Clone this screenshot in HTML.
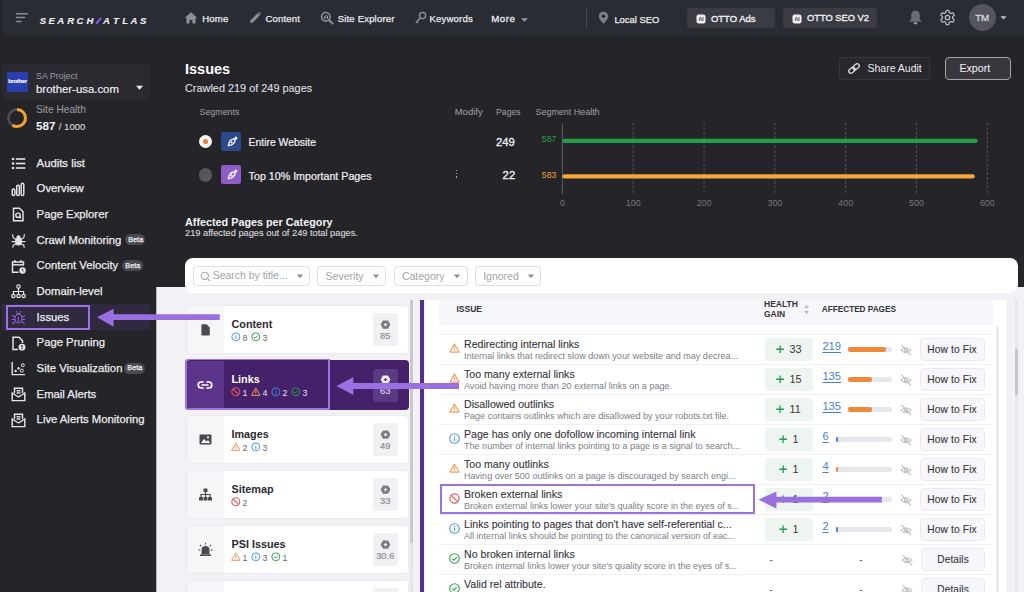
<!DOCTYPE html>
<html><head><meta charset="utf-8"><style>
html,body{margin:0;padding:0;}
body{width:1024px;height:592px;overflow:hidden;position:relative;background:#252429;font-family:"Liberation Sans",sans-serif;}
.t{position:absolute;white-space:nowrap;line-height:1;}
.b{position:absolute;}
svg.b{overflow:visible;}
</style></head><body>
<div class="b" style="left:2.00px;top:-10.00px;width:1022.00px;height:45.50px;background:#2a2c34;border-radius:0 0 0 9px;"></div>
<svg class="b" style="left:14.00px;top:10.00px;" width="16" height="14" viewBox="0 0 16 14"><g stroke="#8d8d93" stroke-width="1.6" stroke-linecap="round"><line x1="2.5" y1="3.7" x2="13.3" y2="3.7"/><line x1="2.5" y1="7.5" x2="10.5" y2="7.5"/><line x1="2.5" y1="11.5" x2="7" y2="11.5"/></g></svg>
<svg class="b" style="left:35.00px;top:10.00px;" width="120" height="20" viewBox="0 0 120 20"><g transform="scale(1.120,1)"><text x="4.20 12.05 19.91 28.75 37.14 46.07 60.71 69.64 77.95 85.27 93.75" y="13.85" font-family="Liberation Sans" font-weight="bold" font-style="italic" font-size="8.5" fill="#f2f2f4" stroke="#f2f2f4" stroke-width="0.1">SEARCHATLAS</text></g><line x1="61.2" y1="13.6" x2="66.0" y2="7.8" stroke="#8f5cf5" stroke-width="1.9"/></svg>
<svg class="b" style="left:184.00px;top:11.30px;" width="14" height="14" viewBox="0 0 14 14"><path d="M7 1.3 L13.2 6.8 L11.6 6.8 L11.6 12.6 L8.4 12.6 L8.4 9 L5.6 9 L5.6 12.6 L2.4 12.6 L2.4 6.8 L0.8 6.8 Z" fill="#8e8e94"/></svg>
<div class="t " style="left:202.20px;top:14.07px;font-size:9.6px;color:#e9e9ec;font-weight:normal;letter-spacing:0.15px;-webkit-text-stroke:0.25px #e9e9ec">Home</div>
<svg class="b" style="left:248.00px;top:11.30px;" width="14" height="14" viewBox="0 0 14 14"><path d="M2 12 L2.6 9.2 L9.8 2 L12 4.2 L4.8 11.4 Z" fill="#8e8e94"/><path d="M10.4 1.4 L11.2 0.8 L13.2 2.8 L12.6 3.6Z" fill="#8e8e94"/></svg>
<div class="t " style="left:265.50px;top:14.07px;font-size:9.6px;color:#e9e9ec;font-weight:normal;letter-spacing:0.15px;-webkit-text-stroke:0.25px #e9e9ec">Content</div>
<svg class="b" style="left:320.00px;top:10.80px;" width="14" height="14" viewBox="0 0 14 14"><circle cx="5.8" cy="5.8" r="4.3" stroke="#8e8e94" stroke-width="1.6" fill="none"/><line x1="9" y1="9" x2="12.6" y2="12.6" stroke="#8e8e94" stroke-width="2" stroke-linecap="round"/><rect x="3.8" y="5" width="1.1" height="2.8" fill="#8e8e94"/><rect x="5.4" y="3.6" width="1.1" height="4.2" fill="#8e8e94"/><rect x="7" y="4.6" width="1.1" height="3.2" fill="#8e8e94"/></svg>
<div class="t " style="left:337.70px;top:14.07px;font-size:9.6px;color:#e9e9ec;font-weight:normal;letter-spacing:0.15px;-webkit-text-stroke:0.25px #e9e9ec">Site Explorer</div>
<svg class="b" style="left:414.00px;top:11.30px;" width="13" height="14" viewBox="0 0 13 14"><circle cx="8.6" cy="4.6" r="3.1" stroke="#8e8e94" stroke-width="1.4" fill="none"/><line x1="6.5" y1="6.8" x2="1.8" y2="11.8" stroke="#8e8e94" stroke-width="1.4"/><line x1="2.6" y1="10.6" x2="4.2" y2="12.2" stroke="#8e8e94" stroke-width="1.2"/></svg>
<div class="t " style="left:429.50px;top:14.07px;font-size:9.6px;color:#e9e9ec;font-weight:normal;letter-spacing:0.15px;-webkit-text-stroke:0.25px #e9e9ec">Keywords</div>
<div class="t " style="left:491.30px;top:13.99px;font-size:9.7px;color:#e9e9ec;font-weight:normal;-webkit-text-stroke:0.3px #e9e9ec;letter-spacing:0.5px">More</div>
<svg class="b" style="left:519.50px;top:16.50px;" width="9" height="6" viewBox="0 0 9 6"><path d="M1 1.2 L8 1.2 L4.5 4.8Z" fill="#9a9aa0"/></svg>
<div class="b" style="left:586.00px;top:7.00px;width:1.00px;height:22.00px;background:#45474e"></div>
<svg class="b" style="left:598.00px;top:11.20px;" width="11" height="14" viewBox="0 0 11 14"><path d="M5.5 0.8 C8.3 0.8 10.2 2.8 10.2 5.3 C10.2 8.2 5.5 12.8 5.5 12.8 C5.5 12.8 0.8 8.2 0.8 5.3 C0.8 2.8 2.7 0.8 5.5 0.8Z" fill="#7e7e85"/><circle cx="5.5" cy="5.2" r="1.7" fill="#2a2b32"/></svg>
<div class="t " style="left:614.40px;top:14.54px;font-size:9.4px;color:#ececef;font-weight:normal;-webkit-text-stroke:0.25px #ececef">Local SEO</div>
<div class="b" style="left:687.00px;top:8.00px;width:88.00px;height:19.90px;background:#3a3b43;border-radius:3px"></div>
<svg class="b" style="left:695.50px;top:13.50px;" width="10" height="10" viewBox="0 0 10 10"><rect x="0.5" y="0.5" width="9" height="9" rx="2" fill="#f0f0f2"/><text x="5" y="7.3" font-size="5.2" font-weight="bold" text-anchor="middle" fill="#3a3b43" font-family="Liberation Sans">AI</text></svg>
<div class="t " style="left:710.90px;top:14.26px;font-size:9.5px;color:#f0f0f2;font-weight:normal;-webkit-text-stroke:0.35px #f0f0f2">OTTO Ads</div>
<div class="b" style="left:783.00px;top:8.00px;width:94.20px;height:19.90px;background:#3a3b43;border-radius:3px"></div>
<svg class="b" style="left:791.50px;top:13.50px;" width="10" height="10" viewBox="0 0 10 10"><rect x="0.5" y="0.5" width="9" height="9" rx="2" fill="#f0f0f2"/><text x="5" y="7.3" font-size="5.2" font-weight="bold" text-anchor="middle" fill="#3a3b43" font-family="Liberation Sans">AI</text></svg>
<div class="t " style="left:807.00px;top:14.43px;font-size:9.3px;color:#f0f0f2;font-weight:normal;-webkit-text-stroke:0.35px #f0f0f2">OTTO SEO V2</div>
<svg class="b" style="left:908.00px;top:9.00px;" width="15" height="17" viewBox="0 0 15 17"><path d="M7.5 1.4 C10.4 1.4 11.8 3.6 11.8 6.6 L11.8 10.2 L13.8 12.8 L1.2 12.8 L3.2 10.2 L3.2 6.6 C3.2 3.6 4.6 1.4 7.5 1.4Z" fill="#6b6b72"/><rect x="5.6" y="13.3" width="3.8" height="1.9" rx="0.9" fill="#9a9aa0"/></svg>
<svg class="b" style="left:939.00px;top:8.80px;" width="17" height="17" viewBox="0 0 17 17"><path d="M8.50 1.38 L8.87 1.39 L9.24 1.45 L9.60 1.58 L9.90 1.93 L10.08 2.61 L10.19 3.29 L10.36 3.65 L10.58 3.83 L10.81 3.97 L11.04 4.10 L11.27 4.24 L11.50 4.37 L11.77 4.46 L12.17 4.43 L12.81 4.19 L13.49 4.00 L13.94 4.09 L14.24 4.33 L14.47 4.62 L14.67 4.94 L14.84 5.27 L14.98 5.62 L15.04 5.99 L14.89 6.42 L14.39 6.92 L13.86 7.36 L13.63 7.69 L13.58 7.97 L13.57 8.23 L13.58 8.50 L13.57 8.77 L13.58 9.03 L13.63 9.31 L13.86 9.64 L14.39 10.08 L14.89 10.58 L15.04 11.01 L14.98 11.38 L14.84 11.73 L14.67 12.06 L14.47 12.38 L14.24 12.67 L13.94 12.91 L13.49 13.00 L12.81 12.81 L12.17 12.57 L11.77 12.54 L11.50 12.63 L11.27 12.76 L11.04 12.90 L10.81 13.03 L10.58 13.17 L10.36 13.35 L10.19 13.71 L10.08 14.39 L9.90 15.07 L9.60 15.42 L9.24 15.55 L8.87 15.61 L8.50 15.62 L8.13 15.61 L7.76 15.55 L7.40 15.42 L7.10 15.07 L6.92 14.39 L6.81 13.71 L6.64 13.35 L6.42 13.17 L6.19 13.03 L5.96 12.90 L5.73 12.76 L5.50 12.63 L5.23 12.54 L4.83 12.57 L4.19 12.81 L3.51 13.00 L3.06 12.91 L2.76 12.67 L2.53 12.38 L2.33 12.06 L2.16 11.73 L2.02 11.38 L1.96 11.01 L2.11 10.58 L2.61 10.08 L3.14 9.64 L3.37 9.31 L3.42 9.03 L3.43 8.77 L3.42 8.50 L3.43 8.23 L3.42 7.97 L3.37 7.69 L3.14 7.36 L2.61 6.92 L2.11 6.42 L1.96 5.99 L2.02 5.62 L2.16 5.27 L2.33 4.94 L2.53 4.62 L2.76 4.33 L3.06 4.09 L3.51 4.00 L4.19 4.19 L4.83 4.43 L5.23 4.46 L5.50 4.37 L5.73 4.24 L5.96 4.10 L6.19 3.97 L6.42 3.83 L6.64 3.65 L6.81 3.29 L6.92 2.61 L7.10 1.93 L7.40 1.58 L7.76 1.45 L8.13 1.39Z" stroke="#b9b9be" stroke-width="1.3" fill="none" stroke-linejoin="round"/><circle cx="8.5" cy="8.5" r="2.2" stroke="#b9b9be" stroke-width="1.3" fill="none"/></svg>
<div class="b" style="left:969.00px;top:4.00px;width:27.00px;height:27.00px;background:#55565d;border-radius:50%"></div>
<div class="t " style="left:975.20px;top:13.30px;font-size:9.8px;color:#d5d5d9;font-weight:normal;letter-spacing:-0.2px;-webkit-text-stroke:0.3px #d5d5d9">TM</div>
<svg class="b" style="left:999.00px;top:15.00px;" width="9" height="6" viewBox="0 0 9 6"><path d="M1.5 1.2 L7.5 1.2 L4.5 4.5Z" fill="#c8c8cc"/></svg>
<div class="b" style="left:2.00px;top:64.00px;width:148.00px;height:35.50px;background:#2b2a31;border-radius:4px"></div>
<div class="b" style="left:7.00px;top:72.00px;width:21.00px;height:20.00px;background:#2a3fae"></div>
<div class="t " style="left:8.20px;top:79.47px;font-size:5.7px;color:#ffffff;font-weight:bold;letter-spacing:-0.2px;-webkit-text-stroke:0.15px #fff">brother</div>
<div class="t " style="left:36.00px;top:71.87px;font-size:8.9px;color:#9d9da4;font-weight:normal;">SA Project</div>
<div class="t " style="left:36.00px;top:84.05px;font-size:11.4px;color:#f1f1f3;font-weight:normal;-webkit-text-stroke:0.15px #f1f1f3">brother-usa.com</div>
<svg class="b" style="left:135.00px;top:85.00px;" width="9" height="6" viewBox="0 0 9 6"><path d="M1 0.8 L8 0.8 L4.5 4.8Z" fill="#f0f0f2"/></svg>
<svg class="b" style="left:6.00px;top:106.50px;" width="22" height="22" viewBox="0 0 22 22"><circle cx="11" cy="11" r="8.5" stroke="#4b4b51" stroke-width="3" fill="none"/><circle cx="11" cy="11" r="8.5" stroke="#f5a32a" stroke-width="3" fill="none" stroke-dasharray="31.35 100" transform="rotate(-90 11 11)"/></svg>
<div class="t " style="left:36.00px;top:104.97px;font-size:10.2px;color:#9d9da4;font-weight:normal;">Site Health</div>
<div class="t" style="left:36px;top:119.60px;font-size:11.7px;color:#f2f2f4;font-weight:bold;">587 <span style="font-size:9.6px;font-weight:normal;color:#e4e4e8">/ 1000</span></div>
<div class="b" style="left:2.00px;top:304.00px;width:148.00px;height:26.00px;background:#30293f"></div>
<div class="b" style="left:6.00px;top:304.50px;width:83.50px;height:25.00px;border:2px solid #9b70e2;box-sizing:border-box"></div>
<svg class="b" style="left:10.50px;top:156.10px;" width="15" height="15" viewBox="0 0 15 15"><g fill="#e4e4e8"><circle cx="2" cy="3" r="1.3"/><circle cx="2" cy="7.5" r="1.3"/><circle cx="2" cy="12" r="1.3"/><rect x="4.8" y="2.2" width="9.5" height="1.6"/><rect x="4.8" y="6.7" width="9.5" height="1.6"/><rect x="4.8" y="11.2" width="9.5" height="1.6"/></g></svg>
<div class="t " style="left:36.60px;top:157.53px;font-size:11.3px;color:#ececef;font-weight:normal;-webkit-text-stroke:0.25px #ececef">Audits list</div>
<svg class="b" style="left:10.50px;top:181.77px;" width="15" height="15" viewBox="0 0 15 15"><g stroke="#e4e4e8" stroke-width="1.45" fill="none"><rect x="1.2" y="7" width="2.6" height="6.5" rx="1.3"/><rect x="5.7" y="3.2" width="2.6" height="10.3" rx="1.3"/><rect x="10.2" y="1.2" width="2.6" height="12.3" rx="1.3"/></g></svg>
<div class="t " style="left:36.60px;top:183.20px;font-size:11.3px;color:#ececef;font-weight:normal;-webkit-text-stroke:0.25px #ececef">Overview</div>
<svg class="b" style="left:10.50px;top:207.44px;" width="15" height="15" viewBox="0 0 15 15"><g stroke="#e4e4e8" stroke-width="1.45" fill="none"><path d="M2.5 1.2 L8.5 1.2 L12 4.7 L12 13.8 L2.5 13.8Z"/><circle cx="7" cy="8.3" r="2.2"/><line x1="8.6" y1="9.9" x2="10" y2="11.3"/></g></svg>
<div class="t " style="left:36.60px;top:208.87px;font-size:11.3px;color:#ececef;font-weight:normal;-webkit-text-stroke:0.25px #ececef">Page Explorer</div>
<svg class="b" style="left:10.50px;top:233.11px;" width="15" height="15" viewBox="0 0 15 15"><g fill="#e4e4e8"><ellipse cx="7.5" cy="8.6" rx="3.6" ry="4" /><circle cx="7.5" cy="4.2" r="2"/></g><g stroke="#e4e4e8" stroke-width="1.1" fill="none" stroke-linecap="round"><path d="M4.6 6.2 L2.2 4.6 L1.6 1.6"/><path d="M10.4 6.2 L12.8 4.6 L13.4 1.6"/><path d="M4 8.6 L1 8.6"/><path d="M11 8.6 L14 8.6"/><path d="M4.6 11 L2.2 12.4 L1.8 14.4"/><path d="M10.4 11 L12.8 12.4 L13.2 14.4"/></g></svg>
<div class="t " style="left:36.60px;top:234.54px;font-size:11.3px;color:#ececef;font-weight:normal;-webkit-text-stroke:0.25px #ececef">Crawl Monitoring</div>
<div class="b" style="left:124.90px;top:234.31px;width:20.50px;height:11.00px;background:#4a4a52;border-radius:6px"></div>
<div class="t " style="left:128.20px;top:236.13px;font-size:7.3px;color:#ececf0;font-weight:normal;-webkit-text-stroke:0.25px #ececf0">Beta</div>
<svg class="b" style="left:10.50px;top:258.78px;" width="15" height="15" viewBox="0 0 15 15"><g stroke="#e4e4e8" stroke-width="1.45" fill="none"><path d="M7.5 13.2 L1.5 13.2 L1.5 3 L12.5 3 L12.5 6.5"/><line x1="1.5" y1="5.8" x2="12.5" y2="5.8"/><line x1="4" y1="1" x2="4" y2="3.5"/><line x1="10" y1="1" x2="10" y2="3.5"/></g><circle cx="11.5" cy="11.5" r="3.2" fill="#e4e4e8"/><path d="M11.5 9.8 L11.5 11.6 L12.7 12.3" stroke="#232228" stroke-width="0.9" fill="none"/></svg>
<div class="t " style="left:36.60px;top:260.21px;font-size:11.3px;color:#ececef;font-weight:normal;-webkit-text-stroke:0.25px #ececef">Content Velocity</div>
<div class="b" style="left:122.00px;top:259.98px;width:20.50px;height:11.00px;background:#4a4a52;border-radius:6px"></div>
<div class="t " style="left:125.30px;top:261.80px;font-size:7.3px;color:#ececf0;font-weight:normal;-webkit-text-stroke:0.25px #ececf0">Beta</div>
<svg class="b" style="left:10.50px;top:284.45px;" width="15" height="15" viewBox="0 0 15 15"><g stroke="#e4e4e8" stroke-width="1.2" fill="none"><circle cx="7.5" cy="2.6" r="1.7"/><circle cx="2.4" cy="12" r="1.7"/><circle cx="7.5" cy="12" r="1.7"/><circle cx="12.6" cy="12" r="1.7"/><path d="M7.5 4.3 L7.5 10.3 M2.4 10.3 L2.4 7.5 L12.6 7.5 L12.6 10.3"/></g></svg>
<div class="t " style="left:36.60px;top:285.88px;font-size:11.3px;color:#ececef;font-weight:normal;-webkit-text-stroke:0.25px #ececef">Domain-level</div>
<svg class="b" style="left:10.50px;top:310.12px;" width="15" height="15" viewBox="0 0 15 15"><g stroke="#8e62d4" stroke-width="1.1" fill="none"><ellipse cx="7.5" cy="8.6" rx="3.6" ry="4.4"/><path d="M5.3 4.8 Q7.5 2 9.7 4.8"/><path d="M3.9 7 L1 5.5 M11.1 7 L14 5.5 M3.9 9.5 L0.8 9.5 M11.1 9.5 L14.2 9.5 M4.2 11.8 L1.3 13.8 M10.8 11.8 L13.7 13.8 M6 2.5 L5 1 M9 2.5 L10 1"/><line x1="7.5" y1="7" x2="7.5" y2="11.5"/></g></svg>
<div class="t " style="left:36.60px;top:311.55px;font-size:11.3px;color:#ececef;font-weight:normal;-webkit-text-stroke:0.25px #ececef">Issues</div>
<svg class="b" style="left:10.50px;top:335.79px;" width="15" height="15" viewBox="0 0 15 15"><g stroke="#e4e4e8" stroke-width="1.45" fill="none"><path d="M7 13.5 L2 13.5 L2 1.3 L8 1.3 L11.5 4.8 L11.5 7"/></g><circle cx="11" cy="11.2" r="3.4" fill="#e4e4e8"/><rect x="10.4" y="9" width="1.2" height="2.6" fill="#232228"/><rect x="10.4" y="12.2" width="1.2" height="1" fill="#232228"/></svg>
<div class="t " style="left:36.60px;top:337.22px;font-size:11.3px;color:#ececef;font-weight:normal;-webkit-text-stroke:0.25px #ececef">Page Pruning</div>
<svg class="b" style="left:10.50px;top:361.46px;" width="15" height="15" viewBox="0 0 15 15"><g stroke="#e4e4e8" stroke-width="1.4" fill="none"><path d="M1.2 1 L1.2 13.6 L14 13.6"/></g><g fill="#e4e4e8"><circle cx="4.6" cy="10" r="1.2"/><circle cx="7.6" cy="7.2" r="1.2"/></g><g stroke="#e4e4e8" stroke-width="1" fill="none"><circle cx="10.8" cy="9.6" r="1.5"/><circle cx="11.8" cy="4.2" r="1.5"/></g></svg>
<div class="t " style="left:36.60px;top:362.89px;font-size:11.3px;color:#ececef;font-weight:normal;-webkit-text-stroke:0.25px #ececef">Site Visualization</div>
<div class="b" style="left:124.00px;top:362.66px;width:20.50px;height:11.00px;background:#4a4a52;border-radius:6px"></div>
<div class="t " style="left:127.30px;top:364.48px;font-size:7.3px;color:#ececf0;font-weight:normal;-webkit-text-stroke:0.25px #ececf0">Beta</div>
<svg class="b" style="left:10.50px;top:387.13px;" width="15" height="15" viewBox="0 0 15 15"><g stroke="#e4e4e8" stroke-width="1.45" fill="none"><path d="M3.5 6 L3.5 1.3 L11.5 1.3 L11.5 6"/><path d="M1.2 6 L1.2 13.6 L13.8 13.6 L13.8 6 L7.5 10 Z"/><line x1="5.6" y1="3.8" x2="9.4" y2="3.8"/><line x1="5.6" y1="6" x2="9.4" y2="6"/></g></svg>
<div class="t " style="left:36.60px;top:388.56px;font-size:11.3px;color:#ececef;font-weight:normal;-webkit-text-stroke:0.25px #ececef">Email Alerts</div>
<svg class="b" style="left:10.50px;top:412.80px;" width="15" height="15" viewBox="0 0 15 15"><g stroke="#e4e4e8" stroke-width="1.45" fill="none"><path d="M3.5 6 L3.5 1.3 L11.5 1.3 L11.5 6"/><path d="M1.2 6 L1.2 13.6 L13.8 13.6 L13.8 6 L7.5 10 Z"/><line x1="5.6" y1="3.8" x2="9.4" y2="3.8"/><line x1="5.6" y1="6" x2="9.4" y2="6"/></g></svg>
<div class="t " style="left:36.60px;top:414.23px;font-size:11.3px;color:#ececef;font-weight:normal;-webkit-text-stroke:0.25px #ececef">Live Alerts Monitoring</div>
<div class="t " style="left:185.00px;top:61.83px;font-size:14.5px;color:#ffffff;font-weight:bold;">Issues</div>
<div class="t " style="left:185.00px;top:82.67px;font-size:10.9px;color:#dcdce0;font-weight:normal;-webkit-text-stroke:0.15px #dcdce0">Crawled 219 of 249 pages</div>
<div class="b" style="left:839.30px;top:57.00px;width:91.10px;height:22.70px;border:1px dotted #4a4a52;border-radius:4px;box-sizing:border-box;background:#28272d"></div>
<svg class="b" style="left:847.00px;top:62.00px;" width="14" height="13" viewBox="0 0 14 13"><g stroke="#dadade" stroke-width="1.3" fill="none" transform="rotate(-40 7 6.5)"><rect x="0.8" y="4.3" width="7" height="4.4" rx="2.2"/><rect x="6.2" y="4.3" width="7" height="4.4" rx="2.2"/></g></svg>
<div class="t " style="left:867.50px;top:63.41px;font-size:10.5px;color:#ececef;font-weight:normal;">Share Audit</div>
<div class="b" style="left:945.00px;top:57.00px;width:66.20px;height:22.70px;border:1px solid #a2a2a8;border-radius:4px;box-sizing:border-box;background:#38373e"></div>
<div class="t " style="left:959.40px;top:63.24px;font-size:10.7px;color:#f4f4f6;font-weight:normal;">Export</div>
<div class="t " style="left:199.50px;top:107.57px;font-size:8.9px;color:#a0a0a7;font-weight:normal;">Segments</div>
<div class="t " style="left:454.70px;top:107.06px;font-size:9.5px;color:#a0a0a7;font-weight:normal;">Modify</div>
<div class="t " style="left:496.00px;top:107.94px;font-size:8.7px;color:#a0a0a7;font-weight:normal;">Pages</div>
<div class="t " style="left:535.50px;top:107.72px;font-size:8.95px;color:#a0a0a7;font-weight:normal;">Segment Health</div>
<div class="b" style="left:198.80px;top:134.70px;width:13.60px;height:13.60px;background:#f8f8fa;border-radius:50%"></div>
<div class="b" style="left:203.00px;top:139.00px;width:5.20px;height:5.20px;background:#f0793a;border-radius:50%"></div>
<div class="b" style="left:221.30px;top:132.00px;width:19.70px;height:19.40px;background:#2c4a8b;border-radius:2.5px"></div>
<svg class="b" style="left:224.60px;top:135.00px;" width="14" height="14" viewBox="0 0 14 14"><g transform="rotate(45 7 7)"><path d="M7 2.6 C9.6 5 9.8 8.6 7 12.2 C4.2 8.6 4.4 5 7 2.6Z" stroke="#ffffff" stroke-width="1.3" fill="none"/><circle cx="7" cy="7.6" r="1.1" fill="#ffffff"/><rect x="5.6" y="0.2" width="2.8" height="2.6" rx="0.9" fill="#ffffff"/></g></svg>
<div class="t " style="left:248.60px;top:137.70px;font-size:10.4px;color:#f2f2f4;font-weight:normal;-webkit-text-stroke:0.2px #f2f2f4">Entire Website</div>
<div class="t " style="left:496.00px;top:136.63px;font-size:11.3px;color:#f2f2f4;font-weight:normal;-webkit-text-stroke:0.3px #f2f2f4">249</div>
<div class="b" style="left:198.80px;top:168.20px;width:13.60px;height:13.60px;background:#56565d;border-radius:50%"></div>
<div class="b" style="left:221.30px;top:165.20px;width:19.70px;height:19.20px;background:#8d5cc6;border-radius:2.5px"></div>
<svg class="b" style="left:224.60px;top:168.00px;" width="14" height="14" viewBox="0 0 14 14"><g transform="rotate(45 7 7)"><path d="M7 2.6 C9.6 5 9.8 8.6 7 12.2 C4.2 8.6 4.4 5 7 2.6Z" stroke="#ffffff" stroke-width="1.3" fill="none"/><circle cx="7" cy="7.6" r="1.1" fill="#ffffff"/><rect x="5.6" y="0.2" width="2.8" height="2.6" rx="0.9" fill="#ffffff"/></g></svg>
<div class="t " style="left:248.60px;top:170.74px;font-size:10.7px;color:#f2f2f4;font-weight:normal;-webkit-text-stroke:0.2px #f2f2f4">Top 10% Important Pages</div>
<div class="b" style="left:455.70px;top:169.60px;width:1.60px;height:1.60px;background:#c8c8cc;border-radius:50%"></div>
<div class="b" style="left:455.70px;top:172.90px;width:1.60px;height:1.60px;background:#c8c8cc;border-radius:50%"></div>
<div class="b" style="left:455.70px;top:176.20px;width:1.60px;height:1.60px;background:#c8c8cc;border-radius:50%"></div>
<div class="t " style="left:502.60px;top:169.53px;font-size:11.3px;color:#f2f2f4;font-weight:normal;-webkit-text-stroke:0.3px #f2f2f4">22</div>
<svg class="b" style="left:555.00px;top:122.50px;" width="440" height="72" viewBox="0 0 440 72"><line x1="78.22" y1="0" x2="78.22" y2="70" stroke="#5c5c63" stroke-width="0.9" stroke-dasharray="2.5 2"/><line x1="149.04" y1="0" x2="149.04" y2="70" stroke="#5c5c63" stroke-width="0.9" stroke-dasharray="2.5 2"/><line x1="219.86" y1="0" x2="219.86" y2="70" stroke="#5c5c63" stroke-width="0.9" stroke-dasharray="2.5 2"/><line x1="290.68" y1="0" x2="290.68" y2="70" stroke="#5c5c63" stroke-width="0.9" stroke-dasharray="2.5 2"/><line x1="361.50" y1="0" x2="361.50" y2="70" stroke="#5c5c63" stroke-width="0.9" stroke-dasharray="2.5 2"/><line x1="432.32" y1="0" x2="432.32" y2="70" stroke="#5c5c63" stroke-width="0.9" stroke-dasharray="2.5 2"/><line x1="7.40" y1="0" x2="7.40" y2="71.5" stroke="#5c5c63" stroke-width="1"/><line x1="9.40" y1="17.8" x2="420.60" y2="17.8" stroke="#22a046" stroke-width="4.3" stroke-linecap="round"/><line x1="9.40" y1="53.4" x2="417.70" y2="53.4" stroke="#f5a73a" stroke-width="4.3" stroke-linecap="round"/></svg>
<div class="t " style="left:541.80px;top:135.44px;font-size:8.7px;color:#24a148;font-weight:normal;">587</div>
<div class="t " style="left:541.80px;top:170.84px;font-size:8.7px;color:#efa23c;font-weight:normal;">583</div>
<div class="t" style="left:542.40px;width:40px;text-align:center;top:198.97px;font-size:8.9px;color:#77777e">0</div>
<div class="t" style="left:613.22px;width:40px;text-align:center;top:198.97px;font-size:8.9px;color:#77777e">100</div>
<div class="t" style="left:684.04px;width:40px;text-align:center;top:198.97px;font-size:8.9px;color:#77777e">200</div>
<div class="t" style="left:754.86px;width:40px;text-align:center;top:198.97px;font-size:8.9px;color:#77777e">300</div>
<div class="t" style="left:825.68px;width:40px;text-align:center;top:198.97px;font-size:8.9px;color:#77777e">400</div>
<div class="t" style="left:896.50px;width:40px;text-align:center;top:198.97px;font-size:8.9px;color:#77777e">500</div>
<div class="t" style="left:967.32px;width:40px;text-align:center;top:198.97px;font-size:8.9px;color:#77777e">600</div>
<div class="t " style="left:185.00px;top:216.61px;font-size:10.8px;color:#f4f4f6;font-weight:bold;">Affected Pages per Category</div>
<div class="t " style="left:185.00px;top:229.45px;font-size:9.27px;color:#d4d4d8;font-weight:normal;-webkit-text-stroke:0.15px #d4d4d8">219 affected pages out of 249 total pages.</div>
<div class="b" style="left:156.00px;top:287.00px;width:868.00px;height:305.00px;background:#f3f1f6"></div>
<div class="b" style="left:156.00px;top:287.00px;width:1.20px;height:305.00px;background:#b9b8be"></div>
<div class="b" style="left:185.00px;top:258.00px;width:833.00px;height:34.70px;background:#ffffff;border-radius:8px"></div>
<div class="b" style="left:193.00px;top:266.30px;width:117.00px;height:19.70px;border:1px solid #dedde2;border-radius:4px;box-sizing:border-box;background:#fff"></div>
<div class="t " style="left:212.70px;top:271.45px;font-size:10.46px;color:#a3a3a9;font-weight:normal;">Search by title...</div>
<svg class="b" style="left:295.50px;top:274.00px;" width="8" height="5" viewBox="0 0 8 5"><path d="M0.8 0.5 L7.2 0.5 L4 4.2Z" fill="#8e8e94"/></svg>
<svg class="b" style="left:199.50px;top:270.50px;" width="11" height="11" viewBox="0 0 11 11"><circle cx="4.8" cy="4.8" r="3.6" stroke="#a8a8ae" stroke-width="1.1" fill="none"/><line x1="7.4" y1="7.4" x2="10" y2="10" stroke="#a8a8ae" stroke-width="1.1"/></svg>
<div class="b" style="left:317.30px;top:266.30px;width:69.20px;height:19.70px;border:1px solid #dedde2;border-radius:4px;box-sizing:border-box;background:#fff"></div>
<div class="t " style="left:325.50px;top:271.35px;font-size:10.57px;color:#a3a3a9;font-weight:normal;">Severity</div>
<svg class="b" style="left:371.80px;top:274.00px;" width="8" height="5" viewBox="0 0 8 5"><path d="M0.8 0.5 L7.2 0.5 L4 4.2Z" fill="#8e8e94"/></svg>
<div class="b" style="left:393.90px;top:266.30px;width:73.90px;height:19.70px;border:1px solid #dedde2;border-radius:4px;box-sizing:border-box;background:#fff"></div>
<div class="t " style="left:401.90px;top:271.39px;font-size:10.52px;color:#a3a3a9;font-weight:normal;">Category</div>
<svg class="b" style="left:453.20px;top:274.00px;" width="8" height="5" viewBox="0 0 8 5"><path d="M0.8 0.5 L7.2 0.5 L4 4.2Z" fill="#8e8e94"/></svg>
<div class="b" style="left:475.20px;top:266.30px;width:66.30px;height:19.70px;border:1px solid #dedde2;border-radius:4px;box-sizing:border-box;background:#fff"></div>
<div class="t " style="left:483.20px;top:271.41px;font-size:10.5px;color:#a3a3a9;font-weight:normal;">Ignored</div>
<svg class="b" style="left:526.80px;top:274.00px;" width="8" height="5" viewBox="0 0 8 5"><path d="M0.8 0.5 L7.2 0.5 L4 4.2Z" fill="#8e8e94"/></svg>
<div class="b" style="left:185.50px;top:304.50px;width:223.00px;height:49.50px;background:#ffffff;border-radius:4px;border:1px solid #ebeaef;box-sizing:border-box"></div>
<div class="b" style="left:186.50px;top:305.50px;width:37.50px;height:47.50px;background:#f6f5f8;border-radius:3px 0 0 3px"></div>
<svg class="b" style="left:197.50px;top:322.00px;" width="15" height="15" viewBox="0 0 15 15"><path d="M4.2 2.2 L8.6 2.2 L11.8 5.4 L11.8 12.6 Q11.8 13.4 11 13.4 L4.2 13.4 Q3.4 13.4 3.4 12.6 L3.4 3 Q3.4 2.2 4.2 2.2Z" fill="#4a4a50"/></svg>
<div class="b" style="left:372.60px;top:312.80px;width:25.40px;height:32.90px;background:#f1f0f3;border-radius:3px"></div>
<div class="t " style="left:231.50px;top:318.86px;font-size:10.8px;color:#2a2a30;font-weight:bold;">Content</div>
<svg class="b" style="left:231.20px;top:332.40px" width="10" height="10" viewBox="0 0 10 10"><circle cx="4.8" cy="4.8" r="4" stroke="#4a9be0" stroke-width="1" fill="none"/><rect x="4.3" y="4" width="1" height="3.3" fill="#4a9be0"/><rect x="4.3" y="2.4" width="1" height="1" fill="#4a9be0"/></svg>
<div class="t " style="left:242.40px;top:334.05px;font-size:8.8px;color:#66666d;font-weight:normal;">8</div>
<svg class="b" style="left:251.20px;top:332.40px" width="10" height="10" viewBox="0 0 10 10"><circle cx="4.8" cy="4.8" r="4" stroke="#3aa05a" stroke-width="1" fill="none"/><path d="M2.9 4.9 L4.3 6.2 L6.8 3.6" stroke="#3aa05a" stroke-width="1" fill="none"/></svg>
<div class="t " style="left:262.40px;top:334.05px;font-size:8.8px;color:#66666d;font-weight:normal;">3</div>
<svg class="b" style="left:380.00px;top:319.80px;" width="11" height="10" viewBox="0 0 11 10"><path d="M0.6 4.6 L3 0.5 L8 0.5 L10.4 4.6 L8 8.7 L3 8.7Z" fill="#7b7b82"/><path d="M5.5 3 L5.5 6.2 M3.9 4.6 L7.1 4.6" stroke="#f1f0f3" stroke-width="1.1"/></svg>
<div class="t" style="left:372.6px;width:25.4px;text-align:center;top:331.44px;font-size:9.4px;color:#8e8e94;-webkit-text-stroke:0.2px #8e8e94">85</div>
<div class="b" style="left:185.50px;top:359.50px;width:223.70px;height:50.20px;background:#452169;border-radius:4px"></div>
<div class="b" style="left:186.50px;top:360.50px;width:37.50px;height:48.50px;background:#5c3489;border-radius:3px 0 0 3px"></div>
<svg class="b" style="left:197.00px;top:377.50px;" width="16" height="14" viewBox="0 0 16 14"><g stroke="#fff" stroke-width="1.7" fill="none" stroke-linecap="round"><path d="M6 4 L4.2 4 A3 3 0 0 0 4.2 10 L6 10"/><path d="M10 4 L11.8 4 A3 3 0 0 1 11.8 10 L10 10"/><line x1="5.2" y1="7" x2="10.8" y2="7"/></g></svg>
<div class="b" style="left:372.60px;top:369.00px;width:25.40px;height:32.50px;background:#5a3a82;border-radius:3px"></div>
<div class="t " style="left:231.50px;top:373.86px;font-size:10.8px;color:#ffffff;font-weight:bold;">Links</div>
<svg class="b" style="left:231.20px;top:387.40px" width="10" height="10" viewBox="0 0 10 10"><circle cx="4.8" cy="4.8" r="4" stroke="#e05a5a" stroke-width="1.1" fill="none"/><line x1="2" y1="2" x2="7.6" y2="7.6" stroke="#e05a5a" stroke-width="1.1"/></svg>
<div class="t " style="left:242.40px;top:389.05px;font-size:8.8px;color:#e8e0f0;font-weight:normal;">1</div>
<svg class="b" style="left:251.20px;top:387.40px" width="10" height="9" viewBox="0 0 10 9"><path d="M4.8 0.9 L9 8.3 L0.6 8.3 Z" stroke="#f0975a" stroke-width="1" fill="none" stroke-linejoin="round"/><rect x="4.3" y="3.4" width="1" height="2.6" fill="#f0975a"/><rect x="4.3" y="6.5" width="1" height="0.9" fill="#f0975a"/></svg>
<div class="t " style="left:262.40px;top:389.05px;font-size:8.8px;color:#e8e0f0;font-weight:normal;">4</div>
<svg class="b" style="left:271.20px;top:387.40px" width="10" height="10" viewBox="0 0 10 10"><circle cx="4.8" cy="4.8" r="4" stroke="#3f86e0" stroke-width="1" fill="none"/><rect x="4.3" y="4" width="1" height="3.3" fill="#3f86e0"/><rect x="4.3" y="2.4" width="1" height="1" fill="#3f86e0"/></svg>
<div class="t " style="left:282.40px;top:389.05px;font-size:8.8px;color:#e8e0f0;font-weight:normal;">2</div>
<svg class="b" style="left:291.20px;top:387.40px" width="10" height="10" viewBox="0 0 10 10"><circle cx="4.8" cy="4.8" r="4" stroke="#2f9a55" stroke-width="1" fill="none"/><path d="M2.9 4.9 L4.3 6.2 L6.8 3.6" stroke="#2f9a55" stroke-width="1" fill="none"/></svg>
<div class="t " style="left:302.40px;top:389.05px;font-size:8.8px;color:#e8e0f0;font-weight:normal;">3</div>
<svg class="b" style="left:380.00px;top:374.80px;" width="11" height="10" viewBox="0 0 11 10"><path d="M0.6 4.6 L3 0.5 L8 0.5 L10.4 4.6 L8 8.7 L3 8.7Z" fill="#f4f0f8"/><path d="M5.5 3 L5.5 6.2 M3.9 4.6 L7.1 4.6" stroke="#5a3a82" stroke-width="1.1"/></svg>
<div class="t" style="left:372.6px;width:25.4px;text-align:center;top:386.44px;font-size:9.4px;color:#d8d0e4;-webkit-text-stroke:0.2px #d8d0e4">63</div>
<div class="b" style="left:185.50px;top:414.50px;width:223.00px;height:49.50px;background:#ffffff;border-radius:4px;border:1px solid #ebeaef;box-sizing:border-box"></div>
<div class="b" style="left:186.50px;top:415.50px;width:37.50px;height:47.50px;background:#f6f5f8;border-radius:3px 0 0 3px"></div>
<svg class="b" style="left:197.50px;top:432.00px;" width="15" height="15" viewBox="0 0 15 15"><rect x="1.5" y="2.5" width="12" height="10" rx="1" fill="#4a4a50"/><path d="M3 11 L6 7 L8.5 9.5 L10 8 L12 11Z" fill="#fff"/><circle cx="10" cy="5.3" r="1.1" fill="#fff"/></svg>
<div class="b" style="left:372.60px;top:422.80px;width:25.40px;height:32.90px;background:#f1f0f3;border-radius:3px"></div>
<div class="t " style="left:231.50px;top:428.86px;font-size:10.8px;color:#2a2a30;font-weight:bold;">Images</div>
<svg class="b" style="left:231.20px;top:442.40px" width="10" height="9" viewBox="0 0 10 9"><path d="M4.8 0.9 L9 8.3 L0.6 8.3 Z" stroke="#f0975a" stroke-width="1" fill="none" stroke-linejoin="round"/><rect x="4.3" y="3.4" width="1" height="2.6" fill="#f0975a"/><rect x="4.3" y="6.5" width="1" height="0.9" fill="#f0975a"/></svg>
<div class="t " style="left:242.40px;top:444.05px;font-size:8.8px;color:#66666d;font-weight:normal;">2</div>
<svg class="b" style="left:251.20px;top:442.40px" width="10" height="10" viewBox="0 0 10 10"><circle cx="4.8" cy="4.8" r="4" stroke="#4a9be0" stroke-width="1" fill="none"/><rect x="4.3" y="4" width="1" height="3.3" fill="#4a9be0"/><rect x="4.3" y="2.4" width="1" height="1" fill="#4a9be0"/></svg>
<div class="t " style="left:262.40px;top:444.05px;font-size:8.8px;color:#66666d;font-weight:normal;">3</div>
<svg class="b" style="left:380.00px;top:429.80px;" width="11" height="10" viewBox="0 0 11 10"><path d="M0.6 4.6 L3 0.5 L8 0.5 L10.4 4.6 L8 8.7 L3 8.7Z" fill="#7b7b82"/><path d="M5.5 3 L5.5 6.2 M3.9 4.6 L7.1 4.6" stroke="#f1f0f3" stroke-width="1.1"/></svg>
<div class="t" style="left:372.6px;width:25.4px;text-align:center;top:441.44px;font-size:9.4px;color:#8e8e94;-webkit-text-stroke:0.2px #8e8e94">49</div>
<div class="b" style="left:185.50px;top:469.50px;width:223.00px;height:49.50px;background:#ffffff;border-radius:4px;border:1px solid #ebeaef;box-sizing:border-box"></div>
<div class="b" style="left:186.50px;top:470.50px;width:37.50px;height:47.50px;background:#f6f5f8;border-radius:3px 0 0 3px"></div>
<svg class="b" style="left:197.50px;top:487.00px;" width="15" height="15" viewBox="0 0 15 15"><g fill="#4a4a50"><rect x="5.5" y="1.5" width="4" height="3.5" rx="0.5"/><rect x="1" y="10" width="4" height="3.5" rx="0.5"/><rect x="5.5" y="10" width="4" height="3.5" rx="0.5"/><rect x="10" y="10" width="4" height="3.5" rx="0.5"/></g><g stroke="#4a4a50" stroke-width="1.2" fill="none"><path d="M7.5 5 L7.5 10 M3 10 L3 7.5 L12 7.5 L12 10"/></g></svg>
<div class="b" style="left:372.60px;top:477.80px;width:25.40px;height:32.90px;background:#f1f0f3;border-radius:3px"></div>
<div class="t " style="left:231.50px;top:483.86px;font-size:10.8px;color:#2a2a30;font-weight:bold;">Sitemap</div>
<svg class="b" style="left:231.20px;top:497.40px" width="10" height="10" viewBox="0 0 10 10"><circle cx="4.8" cy="4.8" r="4" stroke="#e05a5a" stroke-width="1.1" fill="none"/><line x1="2" y1="2" x2="7.6" y2="7.6" stroke="#e05a5a" stroke-width="1.1"/></svg>
<div class="t " style="left:242.40px;top:499.05px;font-size:8.8px;color:#66666d;font-weight:normal;">2</div>
<svg class="b" style="left:380.00px;top:484.80px;" width="11" height="10" viewBox="0 0 11 10"><path d="M0.6 4.6 L3 0.5 L8 0.5 L10.4 4.6 L8 8.7 L3 8.7Z" fill="#7b7b82"/><path d="M5.5 3 L5.5 6.2 M3.9 4.6 L7.1 4.6" stroke="#f1f0f3" stroke-width="1.1"/></svg>
<div class="t" style="left:372.6px;width:25.4px;text-align:center;top:496.44px;font-size:9.4px;color:#8e8e94;-webkit-text-stroke:0.2px #8e8e94">33</div>
<div class="b" style="left:185.50px;top:524.50px;width:223.00px;height:49.50px;background:#ffffff;border-radius:4px;border:1px solid #ebeaef;box-sizing:border-box"></div>
<div class="b" style="left:186.50px;top:525.50px;width:37.50px;height:47.50px;background:#f6f5f8;border-radius:3px 0 0 3px"></div>
<svg class="b" style="left:197.50px;top:542.00px;" width="15" height="15" viewBox="0 0 15 15"><g fill="#4a4a50"><path d="M3.5 12 L3.5 8 A4 4 0 0 1 11.5 8 L11.5 12Z"/><rect x="2" y="12.3" width="11" height="1.8" rx="0.4"/></g><g stroke="#4a4a50" stroke-width="1.1"><line x1="7.5" y1="0.8" x2="7.5" y2="2.6"/><line x1="2" y1="3" x2="3.2" y2="4.2"/><line x1="13" y1="3" x2="11.8" y2="4.2"/><line x1="0.5" y1="8" x2="2.2" y2="8"/><line x1="12.8" y1="8" x2="14.5" y2="8"/></g></svg>
<div class="b" style="left:372.60px;top:532.80px;width:25.40px;height:32.90px;background:#f1f0f3;border-radius:3px"></div>
<div class="t " style="left:231.50px;top:538.86px;font-size:10.8px;color:#2a2a30;font-weight:bold;">PSI Issues</div>
<svg class="b" style="left:231.20px;top:552.40px" width="10" height="9" viewBox="0 0 10 9"><path d="M4.8 0.9 L9 8.3 L0.6 8.3 Z" stroke="#f0975a" stroke-width="1" fill="none" stroke-linejoin="round"/><rect x="4.3" y="3.4" width="1" height="2.6" fill="#f0975a"/><rect x="4.3" y="6.5" width="1" height="0.9" fill="#f0975a"/></svg>
<div class="t " style="left:242.40px;top:554.05px;font-size:8.8px;color:#66666d;font-weight:normal;">1</div>
<svg class="b" style="left:251.20px;top:552.40px" width="10" height="10" viewBox="0 0 10 10"><circle cx="4.8" cy="4.8" r="4" stroke="#4a9be0" stroke-width="1" fill="none"/><rect x="4.3" y="4" width="1" height="3.3" fill="#4a9be0"/><rect x="4.3" y="2.4" width="1" height="1" fill="#4a9be0"/></svg>
<div class="t " style="left:262.40px;top:554.05px;font-size:8.8px;color:#66666d;font-weight:normal;">3</div>
<svg class="b" style="left:271.20px;top:552.40px" width="10" height="10" viewBox="0 0 10 10"><circle cx="4.8" cy="4.8" r="4" stroke="#3aa05a" stroke-width="1" fill="none"/><path d="M2.9 4.9 L4.3 6.2 L6.8 3.6" stroke="#3aa05a" stroke-width="1" fill="none"/></svg>
<div class="t " style="left:282.40px;top:554.05px;font-size:8.8px;color:#66666d;font-weight:normal;">1</div>
<svg class="b" style="left:380.00px;top:539.80px;" width="11" height="10" viewBox="0 0 11 10"><path d="M0.6 4.6 L3 0.5 L8 0.5 L10.4 4.6 L8 8.7 L3 8.7Z" fill="#7b7b82"/><path d="M5.5 3 L5.5 6.2 M3.9 4.6 L7.1 4.6" stroke="#f1f0f3" stroke-width="1.1"/></svg>
<div class="t" style="left:372.6px;width:25.4px;text-align:center;top:551.44px;font-size:9.4px;color:#8e8e94;-webkit-text-stroke:0.2px #8e8e94">30.6</div>
<div class="b" style="left:185.50px;top:579.50px;width:223.00px;height:49.50px;background:#ffffff;border-radius:4px;border:1px solid #ebeaef;box-sizing:border-box"></div>
<div class="b" style="left:186.50px;top:580.50px;width:37.50px;height:47.50px;background:#f6f5f8;border-radius:3px 0 0 3px"></div>
<div class="b" style="left:372.60px;top:587.80px;width:25.40px;height:32.90px;background:#f1f0f3;border-radius:3px"></div>
<div class="b" style="left:185.20px;top:358.50px;width:144.80px;height:51.20px;border:2px solid #9876e0;border-top-width:1.5px;box-sizing:border-box;border-radius:3px 0 0 3px"></div>
<div class="b" style="left:410.00px;top:300.00px;width:3.00px;height:243.00px;background:#c9c8cd"></div>
<div class="b" style="left:410.00px;top:543.00px;width:3.00px;height:49.00px;background:#e6e5ea"></div>
<div class="b" style="left:420.30px;top:300.00px;width:4.20px;height:292.00px;background:#52308b"></div>
<div class="b" style="left:424.70px;top:300.00px;width:581.80px;height:292.00px;background:#ffffff"></div>
<div class="b" style="left:439.00px;top:300.20px;width:553.80px;height:25.40px;background:#f7f6fa;border-radius:3px"></div>
<div class="t " style="left:456.50px;top:305.00px;font-size:8.5px;color:#34343a;font-weight:bold;">ISSUE</div>
<div class="t " style="left:764.00px;top:300.10px;font-size:8.5px;color:#34343a;font-weight:bold;">HEALTH</div>
<div class="t " style="left:764.00px;top:309.80px;font-size:8.5px;color:#34343a;font-weight:bold;">GAIN</div>
<svg class="b" style="left:803.00px;top:303.50px;" width="7" height="11" viewBox="0 0 7 11"><path d="M3.5 1 L6 4 L1 4Z M3.5 10 L6 7 L1 7Z" fill="#b8b8be"/></svg>
<div class="t " style="left:821.80px;top:305.75px;font-size:8.21px;color:#34343a;font-weight:bold;">AFFECTED PAGES</div>
<div class="b" style="left:996.00px;top:326.00px;width:3.40px;height:266.00px;background:#ececf0"></div>
<div class="b" style="left:1015.00px;top:300.00px;width:2.80px;height:292.00px;background:#e7e6eb"></div>
<div class="b" style="left:1015.00px;top:348.60px;width:2.80px;height:46.10px;background:#c6c5ca"></div>
<div class="b" style="left:439.00px;top:334.00px;width:553.60px;height:1.00px;background:#f1f0f4"></div>
<svg class="b" style="left:449.20px;top:343.10px" width="11" height="10" viewBox="0 0 11 10"><path d="M5.5 1.1 L10.1 9.1 L0.9 9.1 Z" stroke="#f3a060" stroke-width="1.15" fill="none" stroke-linejoin="round"/><rect x="4.95" y="3.8" width="1.1" height="2.9" fill="#f3a060"/><rect x="4.95" y="7.3" width="1.1" height="0.9" fill="#f3a060"/></svg>
<div class="t " style="left:464.00px;top:338.53px;font-size:10.6px;color:#34343b;font-weight:normal;-webkit-text-stroke:0.1px #34343b">Redirecting internal links</div>
<div class="t " style="left:464.00px;top:351.94px;font-size:9.05px;color:#7e7e86;font-weight:normal;">Internal links that redirect slow down your website and may decrea...</div>
<div class="b" style="left:765.10px;top:338.10px;width:47.50px;height:22.60px;background:#eef5f0;border-radius:3px"></div>
<svg class="b" style="left:776.10px;top:345.20px;" width="8.5" height="8.5" viewBox="0 0 8.5 8.5"><path d="M4.15 0.4 L4.15 8.1 M0.3 4.25 L8 4.25" stroke="#2a9a4c" stroke-width="1.35"/></svg>
<div class="t " style="left:789.60px;top:344.16px;font-size:10.8px;color:#38383e;font-weight:normal;">33</div>
<div class="t " style="left:822.40px;top:340.72px;font-size:11.2px;color:#4a7fd0;font-weight:normal;text-decoration:underline;text-underline-offset:1.6px;text-decoration-thickness:1px">219</div>
<div class="b" style="left:848.08px;top:347.00px;width:43.52px;height:4.50px;background:#e7e6eb;border-radius:2.25px"></div>
<div class="b" style="left:848.08px;top:347.00px;width:38.10px;height:4.50px;background:#f0883a;border-radius:2.25px"></div>
<svg class="b" style="left:899.60px;top:343.60px;" width="12" height="12" viewBox="0 0 12 12"><g stroke="#c2c2c8" stroke-width="1.15" fill="none" stroke-linecap="round"><path d="M1 6.2 Q6 1.2 11 6.2 Q6 11.2 1 6.2Z"/><circle cx="6" cy="6.2" r="1.6"/><line x1="1.8" y1="1.2" x2="10.6" y2="11"/></g></svg>
<div class="b" style="left:920.40px;top:338.40px;width:64.30px;height:22.30px;background:#f7f6fa;border:1px solid #ebe9ef;border-radius:4px;box-sizing:border-box"></div>
<div class="t " style="left:927.20px;top:345.02px;font-size:10.25px;color:#36363c;font-weight:normal;letter-spacing:0.12px;-webkit-text-stroke:0.1px #36363c">How to Fix</div>
<div class="b" style="left:439.00px;top:364.00px;width:553.60px;height:1.00px;background:#f1f0f4"></div>
<svg class="b" style="left:449.20px;top:373.10px" width="11" height="10" viewBox="0 0 11 10"><path d="M5.5 1.1 L10.1 9.1 L0.9 9.1 Z" stroke="#f3a060" stroke-width="1.15" fill="none" stroke-linejoin="round"/><rect x="4.95" y="3.8" width="1.1" height="2.9" fill="#f3a060"/><rect x="4.95" y="7.3" width="1.1" height="0.9" fill="#f3a060"/></svg>
<div class="t " style="left:464.00px;top:368.53px;font-size:10.6px;color:#34343b;font-weight:normal;-webkit-text-stroke:0.1px #34343b">Too many external links</div>
<div class="t " style="left:464.00px;top:381.94px;font-size:9.05px;color:#7e7e86;font-weight:normal;">Avoid having more than 20 external links on a page.</div>
<div class="b" style="left:765.10px;top:368.10px;width:47.50px;height:22.60px;background:#eef5f0;border-radius:3px"></div>
<svg class="b" style="left:776.10px;top:375.20px;" width="8.5" height="8.5" viewBox="0 0 8.5 8.5"><path d="M4.15 0.4 L4.15 8.1 M0.3 4.25 L8 4.25" stroke="#2a9a4c" stroke-width="1.35"/></svg>
<div class="t " style="left:789.60px;top:374.16px;font-size:10.8px;color:#38383e;font-weight:normal;">15</div>
<div class="t " style="left:822.40px;top:370.72px;font-size:11.2px;color:#4a7fd0;font-weight:normal;text-decoration:underline;text-underline-offset:1.6px;text-decoration-thickness:1px">135</div>
<div class="b" style="left:848.08px;top:377.00px;width:43.52px;height:4.50px;background:#e7e6eb;border-radius:2.25px"></div>
<div class="b" style="left:848.08px;top:377.00px;width:23.47px;height:4.50px;background:#f0883a;border-radius:2.25px"></div>
<svg class="b" style="left:899.60px;top:373.60px;" width="12" height="12" viewBox="0 0 12 12"><g stroke="#c2c2c8" stroke-width="1.15" fill="none" stroke-linecap="round"><path d="M1 6.2 Q6 1.2 11 6.2 Q6 11.2 1 6.2Z"/><circle cx="6" cy="6.2" r="1.6"/><line x1="1.8" y1="1.2" x2="10.6" y2="11"/></g></svg>
<div class="b" style="left:920.40px;top:368.40px;width:64.30px;height:22.30px;background:#f7f6fa;border:1px solid #ebe9ef;border-radius:4px;box-sizing:border-box"></div>
<div class="t " style="left:927.20px;top:375.02px;font-size:10.25px;color:#36363c;font-weight:normal;letter-spacing:0.12px;-webkit-text-stroke:0.1px #36363c">How to Fix</div>
<div class="b" style="left:439.00px;top:394.00px;width:553.60px;height:1.00px;background:#f1f0f4"></div>
<svg class="b" style="left:449.20px;top:403.10px" width="11" height="10" viewBox="0 0 11 10"><path d="M5.5 1.1 L10.1 9.1 L0.9 9.1 Z" stroke="#f3a060" stroke-width="1.15" fill="none" stroke-linejoin="round"/><rect x="4.95" y="3.8" width="1.1" height="2.9" fill="#f3a060"/><rect x="4.95" y="7.3" width="1.1" height="0.9" fill="#f3a060"/></svg>
<div class="t " style="left:464.00px;top:398.53px;font-size:10.6px;color:#34343b;font-weight:normal;-webkit-text-stroke:0.1px #34343b">Disallowed outlinks</div>
<div class="t " style="left:464.00px;top:411.94px;font-size:9.05px;color:#7e7e86;font-weight:normal;">Page contains outlinks which are disallowed by your robots.txt file.</div>
<div class="b" style="left:765.10px;top:398.10px;width:47.50px;height:22.60px;background:#eef5f0;border-radius:3px"></div>
<svg class="b" style="left:776.10px;top:405.20px;" width="8.5" height="8.5" viewBox="0 0 8.5 8.5"><path d="M4.15 0.4 L4.15 8.1 M0.3 4.25 L8 4.25" stroke="#2a9a4c" stroke-width="1.35"/></svg>
<div class="t " style="left:789.60px;top:404.16px;font-size:10.8px;color:#38383e;font-weight:normal;">11</div>
<div class="t " style="left:822.40px;top:400.72px;font-size:11.2px;color:#4a7fd0;font-weight:normal;text-decoration:underline;text-underline-offset:1.6px;text-decoration-thickness:1px">135</div>
<div class="b" style="left:848.08px;top:407.00px;width:43.52px;height:4.50px;background:#e7e6eb;border-radius:2.25px"></div>
<div class="b" style="left:848.08px;top:407.00px;width:23.47px;height:4.50px;background:#f0883a;border-radius:2.25px"></div>
<svg class="b" style="left:899.60px;top:403.60px;" width="12" height="12" viewBox="0 0 12 12"><g stroke="#c2c2c8" stroke-width="1.15" fill="none" stroke-linecap="round"><path d="M1 6.2 Q6 1.2 11 6.2 Q6 11.2 1 6.2Z"/><circle cx="6" cy="6.2" r="1.6"/><line x1="1.8" y1="1.2" x2="10.6" y2="11"/></g></svg>
<div class="b" style="left:920.40px;top:398.40px;width:64.30px;height:22.30px;background:#f7f6fa;border:1px solid #ebe9ef;border-radius:4px;box-sizing:border-box"></div>
<div class="t " style="left:927.20px;top:405.02px;font-size:10.25px;color:#36363c;font-weight:normal;letter-spacing:0.12px;-webkit-text-stroke:0.1px #36363c">How to Fix</div>
<div class="b" style="left:439.00px;top:424.00px;width:553.60px;height:1.00px;background:#f1f0f4"></div>
<svg class="b" style="left:449.20px;top:433.00px" width="11" height="11" viewBox="0 0 11 11"><circle cx="5.5" cy="5.5" r="4.8" stroke="#4a9be0" stroke-width="1.05" fill="none"/><rect x="5" y="4.6" width="1.05" height="3.6" fill="#4a9be0"/><rect x="5" y="2.8" width="1.05" height="1.1" fill="#4a9be0"/></svg>
<div class="t " style="left:464.00px;top:428.53px;font-size:10.6px;color:#34343b;font-weight:normal;-webkit-text-stroke:0.1px #34343b">Page has only one dofollow incoming internal link</div>
<div class="t " style="left:464.00px;top:441.94px;font-size:9.05px;color:#7e7e86;font-weight:normal;">The number of internal links pointing to a page is a signal to search...</div>
<div class="b" style="left:765.10px;top:428.10px;width:47.50px;height:22.60px;background:#eef5f0;border-radius:3px"></div>
<svg class="b" style="left:779.10px;top:435.20px;" width="8.5" height="8.5" viewBox="0 0 8.5 8.5"><path d="M4.15 0.4 L4.15 8.1 M0.3 4.25 L8 4.25" stroke="#2a9a4c" stroke-width="1.35"/></svg>
<div class="t " style="left:792.60px;top:434.16px;font-size:10.8px;color:#38383e;font-weight:normal;">1</div>
<div class="t " style="left:822.40px;top:430.72px;font-size:11.2px;color:#4a7fd0;font-weight:normal;text-decoration:underline;text-underline-offset:1.6px;text-decoration-thickness:1px">6</div>
<div class="b" style="left:835.63px;top:437.00px;width:55.97px;height:4.50px;background:#e7e6eb;border-radius:2.25px"></div>
<div class="b" style="left:835.63px;top:437.00px;width:2.20px;height:4.50px;background:#4a86d8;border-radius:2.25px"></div>
<svg class="b" style="left:899.60px;top:433.60px;" width="12" height="12" viewBox="0 0 12 12"><g stroke="#c2c2c8" stroke-width="1.15" fill="none" stroke-linecap="round"><path d="M1 6.2 Q6 1.2 11 6.2 Q6 11.2 1 6.2Z"/><circle cx="6" cy="6.2" r="1.6"/><line x1="1.8" y1="1.2" x2="10.6" y2="11"/></g></svg>
<div class="b" style="left:920.40px;top:428.40px;width:64.30px;height:22.30px;background:#f7f6fa;border:1px solid #ebe9ef;border-radius:4px;box-sizing:border-box"></div>
<div class="t " style="left:927.20px;top:435.02px;font-size:10.25px;color:#36363c;font-weight:normal;letter-spacing:0.12px;-webkit-text-stroke:0.1px #36363c">How to Fix</div>
<div class="b" style="left:439.00px;top:454.00px;width:553.60px;height:1.00px;background:#f1f0f4"></div>
<svg class="b" style="left:449.20px;top:463.10px" width="11" height="10" viewBox="0 0 11 10"><path d="M5.5 1.1 L10.1 9.1 L0.9 9.1 Z" stroke="#f3a060" stroke-width="1.15" fill="none" stroke-linejoin="round"/><rect x="4.95" y="3.8" width="1.1" height="2.9" fill="#f3a060"/><rect x="4.95" y="7.3" width="1.1" height="0.9" fill="#f3a060"/></svg>
<div class="t " style="left:464.00px;top:458.53px;font-size:10.6px;color:#34343b;font-weight:normal;-webkit-text-stroke:0.1px #34343b">Too many outlinks</div>
<div class="t " style="left:464.00px;top:471.94px;font-size:9.05px;color:#7e7e86;font-weight:normal;">Having over 500 outlinks on a page is discouraged by search engi...</div>
<div class="b" style="left:765.10px;top:458.10px;width:47.50px;height:22.60px;background:#eef5f0;border-radius:3px"></div>
<svg class="b" style="left:779.10px;top:465.20px;" width="8.5" height="8.5" viewBox="0 0 8.5 8.5"><path d="M4.15 0.4 L4.15 8.1 M0.3 4.25 L8 4.25" stroke="#2a9a4c" stroke-width="1.35"/></svg>
<div class="t " style="left:792.60px;top:464.16px;font-size:10.8px;color:#38383e;font-weight:normal;">1</div>
<div class="t " style="left:822.40px;top:460.72px;font-size:11.2px;color:#4a7fd0;font-weight:normal;text-decoration:underline;text-underline-offset:1.6px;text-decoration-thickness:1px">4</div>
<div class="b" style="left:835.63px;top:467.00px;width:55.97px;height:4.50px;background:#e7e6eb;border-radius:2.25px"></div>
<div class="b" style="left:835.63px;top:467.00px;width:2.20px;height:4.50px;background:#f0883a;border-radius:2.25px"></div>
<svg class="b" style="left:899.60px;top:463.60px;" width="12" height="12" viewBox="0 0 12 12"><g stroke="#c2c2c8" stroke-width="1.15" fill="none" stroke-linecap="round"><path d="M1 6.2 Q6 1.2 11 6.2 Q6 11.2 1 6.2Z"/><circle cx="6" cy="6.2" r="1.6"/><line x1="1.8" y1="1.2" x2="10.6" y2="11"/></g></svg>
<div class="b" style="left:920.40px;top:458.40px;width:64.30px;height:22.30px;background:#f7f6fa;border:1px solid #ebe9ef;border-radius:4px;box-sizing:border-box"></div>
<div class="t " style="left:927.20px;top:465.02px;font-size:10.25px;color:#36363c;font-weight:normal;letter-spacing:0.12px;-webkit-text-stroke:0.1px #36363c">How to Fix</div>
<div class="b" style="left:439.00px;top:484.00px;width:553.60px;height:1.00px;background:#f1f0f4"></div>
<svg class="b" style="left:449.20px;top:493.00px" width="11" height="11" viewBox="0 0 11 11"><circle cx="5.5" cy="5.5" r="4.6" stroke="#e05858" stroke-width="1.15" fill="none"/><line x1="2.3" y1="2.3" x2="8.7" y2="8.7" stroke="#e05858" stroke-width="1.15"/></svg>
<div class="t " style="left:464.00px;top:488.53px;font-size:10.6px;color:#34343b;font-weight:normal;-webkit-text-stroke:0.1px #34343b">Broken external links</div>
<div class="t " style="left:464.00px;top:501.94px;font-size:9.05px;color:#7e7e86;font-weight:normal;">Broken external links lower your site's quality score in the eyes of s...</div>
<div class="b" style="left:765.10px;top:488.10px;width:47.50px;height:22.60px;background:#eef5f0;border-radius:3px"></div>
<svg class="b" style="left:779.10px;top:495.20px;" width="8.5" height="8.5" viewBox="0 0 8.5 8.5"><path d="M4.15 0.4 L4.15 8.1 M0.3 4.25 L8 4.25" stroke="#2a9a4c" stroke-width="1.35"/></svg>
<div class="t " style="left:792.60px;top:494.16px;font-size:10.8px;color:#38383e;font-weight:normal;">1</div>
<div class="t " style="left:822.40px;top:490.72px;font-size:11.2px;color:#4a7fd0;font-weight:normal;text-decoration:underline;text-underline-offset:1.6px;text-decoration-thickness:1px">2</div>
<div class="b" style="left:835.63px;top:497.00px;width:55.97px;height:4.50px;background:#e7e6eb;border-radius:2.25px"></div>
<div class="b" style="left:835.63px;top:497.00px;width:2.20px;height:4.50px;background:#e05a5a;border-radius:2.25px"></div>
<svg class="b" style="left:899.60px;top:493.60px;" width="12" height="12" viewBox="0 0 12 12"><g stroke="#c2c2c8" stroke-width="1.15" fill="none" stroke-linecap="round"><path d="M1 6.2 Q6 1.2 11 6.2 Q6 11.2 1 6.2Z"/><circle cx="6" cy="6.2" r="1.6"/><line x1="1.8" y1="1.2" x2="10.6" y2="11"/></g></svg>
<div class="b" style="left:920.40px;top:488.40px;width:64.30px;height:22.30px;background:#f7f6fa;border:1px solid #ebe9ef;border-radius:4px;box-sizing:border-box"></div>
<div class="t " style="left:927.20px;top:495.02px;font-size:10.25px;color:#36363c;font-weight:normal;letter-spacing:0.12px;-webkit-text-stroke:0.1px #36363c">How to Fix</div>
<div class="b" style="left:439.00px;top:514.00px;width:553.60px;height:1.00px;background:#f1f0f4"></div>
<svg class="b" style="left:449.20px;top:523.00px" width="11" height="11" viewBox="0 0 11 11"><circle cx="5.5" cy="5.5" r="4.8" stroke="#4a9be0" stroke-width="1.05" fill="none"/><rect x="5" y="4.6" width="1.05" height="3.6" fill="#4a9be0"/><rect x="5" y="2.8" width="1.05" height="1.1" fill="#4a9be0"/></svg>
<div class="t " style="left:464.00px;top:518.53px;font-size:10.6px;color:#34343b;font-weight:normal;-webkit-text-stroke:0.1px #34343b">Links pointing to pages that don't have self-referential c...</div>
<div class="t " style="left:464.00px;top:531.94px;font-size:9.05px;color:#7e7e86;font-weight:normal;">All internal links should be pointing to the canonical version of eac...</div>
<div class="b" style="left:765.10px;top:518.10px;width:47.50px;height:22.60px;background:#eef5f0;border-radius:3px"></div>
<svg class="b" style="left:779.10px;top:525.20px;" width="8.5" height="8.5" viewBox="0 0 8.5 8.5"><path d="M4.15 0.4 L4.15 8.1 M0.3 4.25 L8 4.25" stroke="#2a9a4c" stroke-width="1.35"/></svg>
<div class="t " style="left:792.60px;top:524.16px;font-size:10.8px;color:#38383e;font-weight:normal;">1</div>
<div class="t " style="left:822.40px;top:520.72px;font-size:11.2px;color:#4a7fd0;font-weight:normal;text-decoration:underline;text-underline-offset:1.6px;text-decoration-thickness:1px">2</div>
<div class="b" style="left:835.63px;top:527.00px;width:55.97px;height:4.50px;background:#e7e6eb;border-radius:2.25px"></div>
<div class="b" style="left:835.63px;top:527.00px;width:2.20px;height:4.50px;background:#4a86d8;border-radius:2.25px"></div>
<svg class="b" style="left:899.60px;top:523.60px;" width="12" height="12" viewBox="0 0 12 12"><g stroke="#c2c2c8" stroke-width="1.15" fill="none" stroke-linecap="round"><path d="M1 6.2 Q6 1.2 11 6.2 Q6 11.2 1 6.2Z"/><circle cx="6" cy="6.2" r="1.6"/><line x1="1.8" y1="1.2" x2="10.6" y2="11"/></g></svg>
<div class="b" style="left:920.40px;top:518.40px;width:64.30px;height:22.30px;background:#f7f6fa;border:1px solid #ebe9ef;border-radius:4px;box-sizing:border-box"></div>
<div class="t " style="left:927.20px;top:525.02px;font-size:10.25px;color:#36363c;font-weight:normal;letter-spacing:0.12px;-webkit-text-stroke:0.1px #36363c">How to Fix</div>
<div class="b" style="left:439.00px;top:544.00px;width:553.60px;height:1.00px;background:#f1f0f4"></div>
<svg class="b" style="left:449.20px;top:553.00px" width="11" height="11" viewBox="0 0 11 11"><circle cx="5.5" cy="5.5" r="4.8" stroke="#3aa05a" stroke-width="1.1" fill="none"/><path d="M3.3 5.6 L4.9 7.1 L7.8 4.2" stroke="#3aa05a" stroke-width="1.2" fill="none"/></svg>
<div class="t " style="left:464.00px;top:548.53px;font-size:10.6px;color:#34343b;font-weight:normal;-webkit-text-stroke:0.1px #34343b">No broken internal links</div>
<div class="t " style="left:464.00px;top:561.94px;font-size:9.05px;color:#7e7e86;font-weight:normal;">Broken internal links lower your site's quality score in the eyes of s...</div>
<div class="t " style="left:769.50px;top:554.53px;font-size:10px;color:#55555b;font-weight:normal;">-</div>
<div class="t " style="left:859.20px;top:554.53px;font-size:10px;color:#55555b;font-weight:normal;">-</div>
<svg class="b" style="left:900.60px;top:553.60px;" width="12" height="12" viewBox="0 0 12 12"><g stroke="#c2c2c8" stroke-width="1.15" fill="none" stroke-linecap="round"><path d="M1 6.2 Q6 1.2 11 6.2 Q6 11.2 1 6.2Z"/><circle cx="6" cy="6.2" r="1.6"/><line x1="1.8" y1="1.2" x2="10.6" y2="11"/></g></svg>
<div class="b" style="left:921.30px;top:548.40px;width:63.40px;height:22.30px;background:#f7f6fa;border:1px solid #ebe9ef;border-radius:4px;box-sizing:border-box"></div>
<div class="t " style="left:937.30px;top:555.15px;font-size:10.1px;color:#36363c;font-weight:normal;letter-spacing:0.1px;-webkit-text-stroke:0.1px #36363c">Details</div>
<div class="b" style="left:439.00px;top:574.00px;width:553.60px;height:1.00px;background:#f1f0f4"></div>
<svg class="b" style="left:449.20px;top:583.00px" width="11" height="11" viewBox="0 0 11 11"><circle cx="5.5" cy="5.5" r="4.8" stroke="#3aa05a" stroke-width="1.1" fill="none"/><path d="M3.3 5.6 L4.9 7.1 L7.8 4.2" stroke="#3aa05a" stroke-width="1.2" fill="none"/></svg>
<div class="t " style="left:464.00px;top:578.53px;font-size:10.6px;color:#34343b;font-weight:normal;-webkit-text-stroke:0.1px #34343b">Valid rel attribute.</div>
<div class="t " style="left:464.00px;top:591.94px;font-size:9.05px;color:#7e7e86;font-weight:normal;">Rel attributes are valid...</div>
<div class="t " style="left:769.50px;top:584.53px;font-size:10px;color:#55555b;font-weight:normal;">-</div>
<div class="t " style="left:859.20px;top:584.53px;font-size:10px;color:#55555b;font-weight:normal;">-</div>
<svg class="b" style="left:900.60px;top:583.60px;" width="12" height="12" viewBox="0 0 12 12"><g stroke="#c2c2c8" stroke-width="1.15" fill="none" stroke-linecap="round"><path d="M1 6.2 Q6 1.2 11 6.2 Q6 11.2 1 6.2Z"/><circle cx="6" cy="6.2" r="1.6"/><line x1="1.8" y1="1.2" x2="10.6" y2="11"/></g></svg>
<div class="b" style="left:921.30px;top:578.40px;width:63.40px;height:22.30px;background:#f7f6fa;border:1px solid #ebe9ef;border-radius:4px;box-sizing:border-box"></div>
<div class="t " style="left:937.30px;top:585.15px;font-size:10.1px;color:#36363c;font-weight:normal;letter-spacing:0.1px;-webkit-text-stroke:0.1px #36363c">Details</div>
<div class="b" style="left:439.70px;top:484.20px;width:315.30px;height:30.20px;border:2px solid #9c72e0;box-sizing:border-box"></div>
<svg class="b" style="left:95.00px;top:306.00px;" width="126" height="23" viewBox="0 0 126 23"><path d="M2 11.3 L18.6 2.75 L18.6 8.2 L124.8 8.2 L124.8 14 L18.6 14 L18.6 20.7Z" fill="#9a6fdf"/></svg>
<svg class="b" style="left:334.00px;top:375.00px;" width="127" height="22" viewBox="0 0 127 22"><path d="M2.5 11 L19.4 2 L19.4 8.1 L125 8.1 L125 13.9 L19.4 13.9 L19.4 20Z" fill="#9a6fdf"/></svg>
<svg class="b" style="left:756.00px;top:489.00px;" width="127" height="22" viewBox="0 0 127 22"><path d="M2.6 10.6 L20.4 2.6 L20.4 7.7 L125.8 7.7 L125.8 13.6 L20.4 13.6 L20.4 19.8Z" fill="#9a6fdf"/></svg>
</body></html>
